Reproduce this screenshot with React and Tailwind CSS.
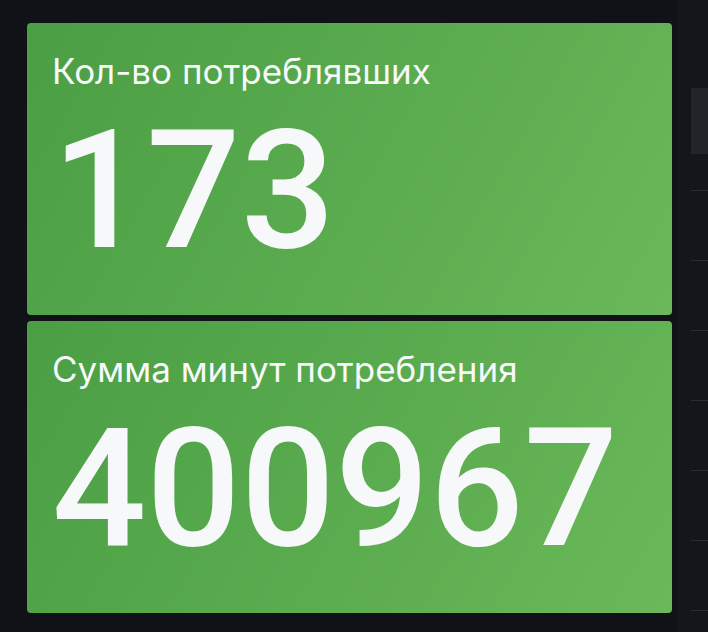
import React from 'react';

const StatCard = ({ title, value }) => (
  <div className="flex-1 rounded-[4px] bg-[linear-gradient(120deg,#4a9e44,#6ab859)] px-[25px] pt-[31px] text-[#f7f8fa] overflow-hidden">
    <div
      className="text-[35px] leading-[35px] whitespace-nowrap"
      style={{ fontFamily: 'Inter, Roboto, sans-serif' }}
    >
      {title}
    </div>
    <div className="mt-[19px] text-[166px] leading-[166px] font-medium whitespace-nowrap">{value}</div>
  </div>
);

const App = () => {
  return (
    <div
      className="w-[708px] h-[632px] bg-[#111217] flex overflow-hidden"
      style={{ fontFamily: 'Roboto, "Noto Sans", sans-serif' }}
    >
      <div className="w-[672px] shrink-0 pl-[27px] pt-[23px] pb-[19px] flex flex-col gap-[6px]">
        <StatCard title="Кол-во потреблявших" value="173" />
        <StatCard title="Сумма минут потребления" value="400967" />
      </div>

      <div className="ml-[5px] flex-1 bg-[#15161b] pl-[14px] pt-[88px]">
        <div className="h-[66px] bg-[#22242a]"></div>
        <div className="mt-[36px] h-px bg-[#2a2c32]"></div>
        <div className="mt-[69px] h-px bg-[#2a2c32]"></div>
        <div className="mt-[69px] h-px bg-[#2a2c32]"></div>
        <div className="mt-[69px] h-px bg-[#2a2c32]"></div>
        <div className="mt-[69px] h-px bg-[#2a2c32]"></div>
        <div className="mt-[69px] h-px bg-[#2a2c32]"></div>
        <div className="mt-[69px] h-px bg-[#2a2c32]"></div>
      </div>
    </div>
  );
};

export default App;
